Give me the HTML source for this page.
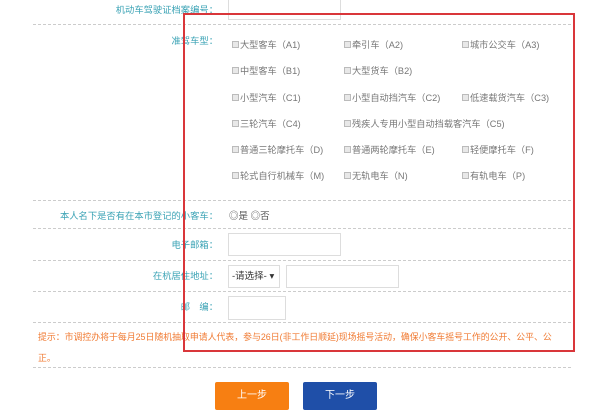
<!DOCTYPE html>
<html><head><meta charset="utf-8"><style>
body{margin:0;width:600px;height:418px;background:#fff;position:relative;overflow:hidden;font-family:"Liberation Sans","Noto Sans CJK SC",sans-serif;font-size:9.3px;}
.a{position:absolute;white-space:nowrap;}
.l{color:#3ba3b5;text-align:right;width:200px;}
.d{position:absolute;left:33px;width:538px;border-top:1px dashed #ccc;height:0;}
.c{color:#777;font-size:9.2px;}
.c:before{content:"";display:inline-block;width:5px;height:5px;border:1px solid #bbb;background:#e8e8e8;margin-right:1px;vertical-align:0px;}
.in{position:absolute;border:1px solid #ddd;background:#fff;}
.red{position:absolute;left:183px;top:13px;width:388px;height:335px;border:2px solid #d9363a;}
.btn{position:absolute;top:382px;width:74px;height:28px;color:#fff;text-align:center;line-height:28px;border-radius:2px;font-size:10px;}
</style></head><body>
<div class="in" style="left:228px;top:-2px;width:111px;height:20px"></div>
<div class="a l" style="left:18px;top:2px">机动车驾驶证档案编号：</div>
<div class="d" style="top:24px"></div>
<div class="a l" style="left:18px;top:33px">准驾车型：</div>
<div class="a c" style="left:232px;top:37px">大型客车（A1)</div>
<div class="a c" style="left:344px;top:37px">牵引车（A2)</div>
<div class="a c" style="left:462px;top:37px">城市公交车（A3)</div>
<div class="a c" style="left:232px;top:63px">中型客车（B1)</div>
<div class="a c" style="left:344px;top:63px">大型货车（B2)</div>
<div class="a c" style="left:232px;top:90px">小型汽车（C1)</div>
<div class="a c" style="left:344px;top:90px">小型自动挡汽车（C2)</div>
<div class="a c" style="left:462px;top:90px">低速载货汽车（C3)</div>
<div class="a c" style="left:232px;top:116px">三轮汽车（C4)</div>
<div class="a c" style="left:344px;top:116px">残疾人专用小型自动挡载客汽车（C5)</div>
<div class="a c" style="left:232px;top:142px">普通三轮摩托车（D)</div>
<div class="a c" style="left:344px;top:142px">普通两轮摩托车（E)</div>
<div class="a c" style="left:462px;top:142px">轻便摩托车（F)</div>
<div class="a c" style="left:232px;top:168px">轮式自行机械车（M)</div>
<div class="a c" style="left:344px;top:168px">无轨电车（N)</div>
<div class="a c" style="left:462px;top:168px">有轨电车（P)</div>
<div class="d" style="top:200px"></div>
<div class="a l" style="left:18px;top:208px">本人名下是否有在本市登记的小客车：</div>
<div class="a" style="left:229px;top:208px;color:#555;font-size:9.5px">◎是 ◎否</div>
<div class="d" style="top:228px"></div>
<div class="a l" style="left:18px;top:237px">电子邮箱：</div>
<div class="in" style="left:228px;top:233px;width:111px;height:21px"></div>
<div class="d" style="top:260px"></div>
<div class="a l" style="left:18px;top:268px">在杭居住地址：</div>
<div class="in" style="left:228px;top:265px;width:50px;height:21px;line-height:21px;font-size:9.5px;color:#333;text-indent:3px">-请选择- ▾</div>
<div class="in" style="left:286px;top:265px;width:111px;height:21px"></div>
<div class="d" style="top:291px"></div>
<div class="a l" style="left:18px;top:299px">邮　编：</div>
<div class="in" style="left:228px;top:296px;width:56px;height:22px"></div>
<div class="d" style="top:322px"></div>
<div class="a" style="left:38px;top:330px;color:#f07a32;font-size:8.9px">提示：市调控办将于每月25日随机抽取申请人代表，参与26日(非工作日顺延)现场摇号活动，确保小客车摇号工作的公开、公平、公</div>
<div class="a" style="left:38px;top:351px;color:#f07a32;font-size:8.9px">正。</div>
<div class="d" style="top:367px"></div>
<div class="red"></div>
<div class="btn" style="left:215px;background:#f77f12">上一步</div>
<div class="btn" style="left:303px;background:#1f4fa8">下一步</div>
</body></html>
